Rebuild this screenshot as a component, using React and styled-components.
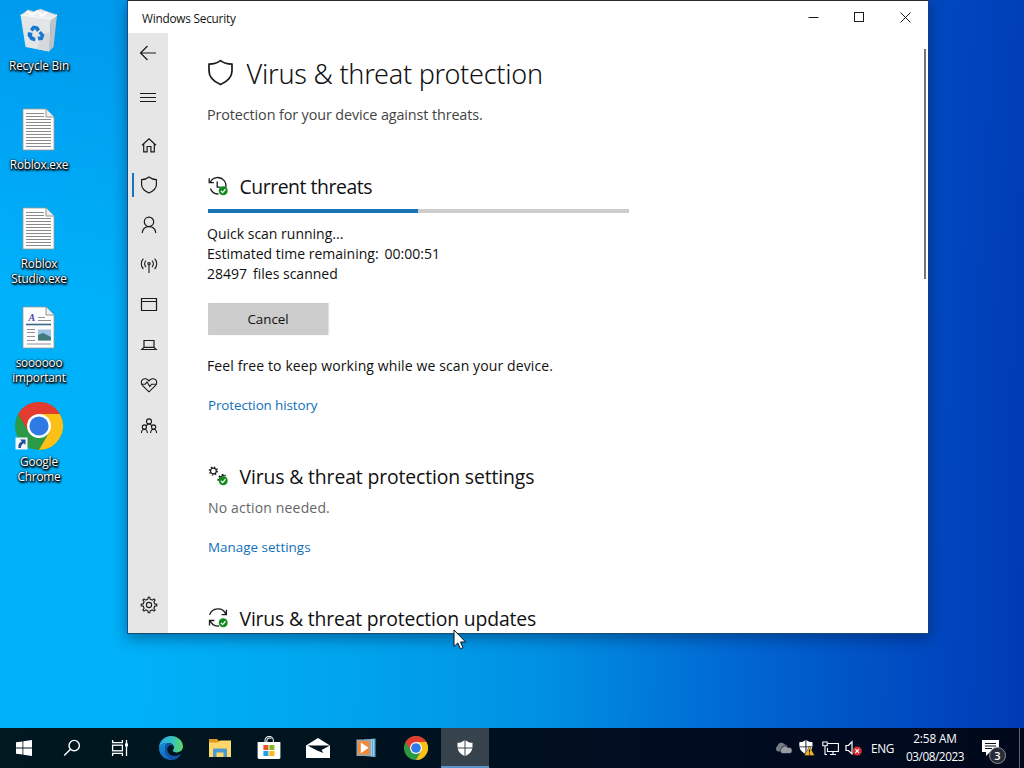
import React from "react";
import styled, { createGlobalStyle } from "styled-components";

const GlobalStyle = createGlobalStyle`
  * {
    box-sizing: border-box;
  }
  body {
    margin: 0;
    overflow: hidden;
    font-family: "Open Sans", "Noto Sans", sans-serif;
  }
`;

const Desktop = styled.div`
  position: relative;
  display: flex;
  flex-direction: column;
  width: 1024px;
  height: 768px;
  overflow: hidden;
  background:
    linear-gradient(180deg, rgba(0, 70, 190, 0.22) 0, rgba(0, 70, 190, 0) 300px),
    linear-gradient(
      91deg,
      #00b2fb 0%,
      #00b0f8 15%,
      #00a6ee 32%,
      #009ae8 45%,
      #008fe2 54%,
      #007bda 63%,
      #0066d2 73%,
      #0054c6 83%,
      #0046be 92%,
      #003ab4 100%
    );
`;

const Icons = styled.div`
  flex: 1;
  display: flex;
  flex-direction: column;
  width: 78px;
  padding-top: 6px;
`;
const DesktopIcon = styled.div`
  display: flex;
  flex-direction: column;
  align-items: center;
  height: 99px;
  svg {
    flex: none;
    overflow: visible;
  }
`;
const IconLabel = styled.div`
  margin-top: 4px;
  font-size: 11.8px;
  line-height: 15px;
  letter-spacing: ${(props) => props.$ls || -0.18}px;
  text-align: center;
  white-space: nowrap;
  color: white;
  text-shadow: 0 0 2px #000, 1px 1px 2px #000, 0 1px 2px #000, 1px 2px 2px rgba(0, 0, 0, 0.7);
`;

const Window = styled.div`
  position: absolute;
  left: 127px;
  top: 0;
  width: 802px;
  height: 634px;
  display: flex;
  flex-direction: column;
  border: 1px solid #14498c;
  border-top-color: #2b2b33;
  border-right-color: #1a3a8c;
  border-bottom-color: #14506e;
  background: white;
  box-shadow: 0 4px 14px rgba(0, 20, 60, 0.45);
`;
const TitleBar = styled.div`
  display: flex;
  align-items: center;
  height: 32px;
  padding-left: 14px;
`;
const TitleText = styled.div`
  flex: 1;
  padding-top: 1px;
  font-size: 11.8px;
  letter-spacing: -0.22px;
  color: #111;
`;
const TitleButton = styled.div`
  display: flex;
  justify-content: center;
  align-items: center;
  width: 46px;
  height: 32px;
  svg {
    display: block;
  }
`;
const Body = styled.div`
  flex: 1;
  display: flex;
  min-height: 0;
`;

const Nav = styled.div`
  display: flex;
  flex-direction: column;
  width: 40px;
  padding-bottom: 8px;
  background: #e6e6e6;
`;
const NavItem = styled.div`
  display: flex;
  justify-content: center;
  align-items: center;
  height: 40px;
  margin-top: ${(props) => props.$gap || 0}px;
  padding-left: 1px;
  svg {
    display: block;
  }
`;
const TopNavItem = styled(NavItem)`
  padding-left: 0;
`;
const ActiveNavItem = styled(NavItem)`
  justify-content: flex-start;
  gap: 4.5px;
  padding-left: 4px;
  &:before {
    content: "";
    width: 2px;
    height: 24px;
    background: #1a73bd;
  }
`;
const Spacer = styled.div`
  flex: 1;
`;

const Content = styled.div`
  flex: 1;
  padding-left: 39px;
  overflow: hidden;
  color: #111;
`;
const PageHead = styled.div`
  display: flex;
  align-items: center;
  height: 40px;
  margin-top: 20px;
  svg {
    margin-top: -2px;
  }
`;
const PageTitle = styled.div`
  margin: 2px 0 0 12.5px;
  font-family: "Noto Sans", sans-serif;
  font-weight: 300;
  font-size: 27px;
  line-height: 40px;
  letter-spacing: -0.24px;
  white-space: nowrap;
`;
const SubTitle = styled.div`
  margin-top: 12px;
  font-size: 14.4px;
  line-height: 20px;
  letter-spacing: -0.12px;
  color: #444;
`;
const SectionHead = styled.div`
  display: flex;
  align-items: center;
  height: 28px;
  margin-top: ${(props) => props.$top}px;
  svg {
    flex: none;
    margin: 1px 0 0 0.5px;
  }
`;
const SectionTitle = styled.div`
  margin-top: 2px;
  margin-left: 11px;
  font-size: 19.4px;
  line-height: 28px;
  letter-spacing: ${(props) => props.$ls || 0}px;
  white-space: nowrap;
`;
const Track = styled.div`
  width: 421px;
  height: 4px;
  margin: 9px 0 11px 1px;
  background: #ccc;
`;
const Bar = styled.div`
  width: 210px;
  height: 100%;
  background: #1a73b5;
`;
const Line = styled.div`
  display: flex;
  gap: 6px;
  font-size: 14px;
  line-height: 20px;
  white-space: nowrap;
`;
const Note = styled.div`
  margin-top: 21px;
  font-size: 14px;
  line-height: 20px;
  letter-spacing: 0.11px;
`;
const Status = styled.div`
  margin: 8px 0 0 1px;
  font-size: 14px;
  line-height: 20px;
  letter-spacing: 0.16px;
  color: #666;
`;
const CancelButton = styled.div`
  width: 120px;
  height: 32px;
  margin: 19px 0 0 1px;
  font-size: 13.4px;
  line-height: 32px;
  letter-spacing: -0.06px;
  text-align: center;
  background: #ccc;
  box-shadow: 1px 0 1px #e2e2e2;
`;
const Link = styled.div`
  margin: 19px 0 0 1px;
  font-size: 13.4px;
  line-height: 20px;
  letter-spacing: ${(props) => props.$ls}px;
  color: #0f70ba;
`;
const Scroll = styled.div`
  width: 2px;
  height: 230px;
  margin: 16px 2px 0 0;
  background: #767676;
`;

const Taskbar = styled.div`
  display: flex;
  width: 1024px;
  height: 40px;
  background: linear-gradient(90deg, #011820 0%, #00141f 30%, #010c20 65%, #01081c 100%);
  color: white;
`;
const TaskGroup = styled.div`
  display: flex;
  gap: ${(props) => props.$gap || 0}px;
  margin-right: 3px;
`;
const TaskButton = styled.div`
  display: flex;
  justify-content: center;
  align-items: center;
  width: 48px;
  height: 40px;
  svg {
    display: block;
  }
`;
const ActiveTaskButton = styled(TaskButton)`
  padding-top: 2px;
  background: #36434d;
  border-bottom: 2px solid #5b93c9;
`;
const Tray = styled.div`
  display: flex;
  align-items: center;
  gap: 6px;
  margin-left: auto;
  margin-right: 4px;
  padding-right: 19px;
  border-right: 1px solid #5a6470;
  svg {
    display: block;
    overflow: visible;
  }
`;
const Lang = styled.div`
  margin-left: 2px;
  font-size: 11.8px;
  letter-spacing: -0.3px;
`;
const Clock = styled.div`
  width: 60px;
  margin: -1px 11px 1px 5px;
  font-size: 11.8px;
  line-height: 18px;
  letter-spacing: -0.14px;
  text-align: center;
  white-space: nowrap;
`;
const ClockDate = styled.div`
  letter-spacing: -0.46px;
`;
const Notifications = styled.div`
  position: relative;
  width: 18px;
  height: 16px;
`;
const Count = styled.div`
  position: absolute;
  left: 7px;
  top: 7px;
  width: 17px;
  height: 17px;
  border: 1px solid #8b9097;
  border-radius: 50%;
  background: #272c36;
  font-size: 11px;
  font-weight: 600;
  line-height: 15px;
  text-align: center;
`;
const Pointer = styled.svg`
  position: absolute;
  left: 452.5px;
  top: 629px;
`;

const Outline = ({ size = 20, stroke = 1.2, children }) => (
  <svg
    width={size}
    height={size}
    viewBox={`0 0 ${size} ${size}`}
    fill="none"
    stroke="#1a1a1a"
    strokeWidth={stroke}
  >
    {children}
  </svg>
);

const ShieldIcon = () => (
  <Outline>
    <path d="M10 2C7.9 3.7 5.4 4.6 2.6 4.7V9.4C2.6 13.2 5.8 16 10 18C14.2 16 17.4 13.2 17.4 9.4V4.7C14.6 4.6 12.1 3.7 10 2Z" />
  </Outline>
);

const BigShieldIcon = () => (
  <Outline size={27} stroke={1.7}>
    <path d="M13.5 1.6C10.2 4 6.3 5 2 5.2V12C2 18.6 7.4 22.8 13.5 25.6C19.6 22.8 25 18.6 25 12V5.2C20.7 5 16.8 4 13.5 1.6Z" />
  </Outline>
);

const GearIcon = () => (
  <Outline stroke={1.1}>
    <circle cx="10" cy="10" r="2.6" />
    <path d="M8.9 4.2L9.2 2.2H10.8L11.1 4.2L13.3 5.1L15 3.9L16.1 5L14.9 6.7L15.8 8.9L17.8 9.2V10.8L15.8 11.1L14.9 13.3L16.1 15L15 16.1L13.3 14.9L11.1 15.8L10.8 17.8H9.2L8.9 15.8L6.7 14.9L5 16.1L3.9 15L5.1 13.3L4.2 11.1L2.2 10.8V9.2L4.2 8.9L5.1 6.7L3.9 5L5 3.9L6.7 5.1Z" />
  </Outline>
);

const Check = () => (
  <g>
    <circle cx="15.2" cy="14.8" r="4.5" fill="#128a1c" stroke="none" />
    <path d="M12.9 14.9L14.6 16.6L17.5 13.3" fill="none" stroke="#fff" strokeWidth="1.3" />
  </g>
);

const HistoryIcon = () => (
  <Outline size={21} stroke={1.3}>
    <path d="M2.3 6.2A8.2 8.2 0 1 1 12 17.6M10.5 18A8.3 8.3 0 0 1 2.4 12.5" />
    <path d="M1.2 2.2V6.6H5.8M9.2 5.6V11.2H12.6" />
    <Check />
  </Outline>
);

const GearsIcon = () => (
  <Outline size={21} stroke={1.2}>
    <circle cx="5.4" cy="5" r="2.9" />
    <circle cx="5.4" cy="5" r="3.9" strokeDasharray="1.4 1.66" strokeWidth="1.5" />
    <path d="M11.4 14.6A4.3 4.3 0 0 1 17.4 10" />
    <path d="M10.2 14.6A5.4 5.4 0 0 1 18 9.2" strokeDasharray="1.6 2" strokeWidth="1.5" />
    <Check />
  </Outline>
);

const UpdateIcon = () => (
  <Outline size={21} stroke={1.3}>
    <path d="M1.6 6.9A8.7 8.7 0 0 1 18 6.4M18.4 1.8V6.7H13.6" />
    <path d="M11 18A8.7 8.7 0 0 1 2 12.6M1.5 17.6V12.5H6.4" />
    <Check />
  </Outline>
);

const RecycleBin = () => (
  <svg width="48" height="48" viewBox="0 0 48 48">
    <path d="M6 9L13 4L20 6L25 3L33 6L42 9L36 13L11 12Z" fill="#e9edf0" stroke="#b9c4cc" strokeWidth="0.8" />
    <path d="M5.5 9L36 13L34 45.5L10.5 41Z" fill="#e3e6e8" />
    <path d="M36 13L42 9L38.5 41L34 45.5Z" fill="#bdc3c8" />
    <path d="M26 29L35 26L34 45.5L22 43Z" fill="#d6d9db" />
    <path d="M5.5 9L36 13L42 9" fill="none" stroke="#fafafa" strokeWidth="1.2" />
    <path d="M12 5L17 9L22 5L27 10L32 6" fill="none" stroke="#fff" strokeWidth="2" />
    <g fill="#1878cf">
      <path d="M15 23L18 19.5L23 20.5L25 23.5L22 26L20 23L17.5 25.5Z" />
      <path d="M26 25L29.5 29L27.5 34L23.5 34.5L22.5 30.5L26 30.5L23.5 27Z" />
      <path d="M13 26L17.5 27L17 30L20.5 32L20 35.5L15.5 34L12.5 29.5Z" />
    </g>
  </svg>
);

const Page = ({ children }) => (
  <svg width="48" height="48" viewBox="0 0 48 48">
    <path d="M8 4H31L39 12V45H8Z" fill="#fdfdfd" stroke="#9a9a92" strokeWidth="0.8" />
    <path d="M31 4V12H39" fill="#eee" stroke="#888" strokeWidth="0.9" />
    {children}
  </svg>
);

const TextFile = () => (
  <Page>
    <path
      d="M11 8.5H29M11 11.5H29M11 14.5H36M11 17.5H36M11 20.5H36M11 23.5H36M11 26.5H36M11 29.5H36M11 32.5H36M11 35.5H36M11 38.5H36M11 41.5H36"
      stroke="#8a8a8a"
      strokeWidth="1"
    />
  </Page>
);

const Letter = styled.text`
  font: italic bold 10px "Liberation Serif", serif;
`;
const WriterFile = () => (
  <Page>
    <Letter x="13.5" y="18" fill="#4a3fb0">
      A
    </Letter>
    <path d="M23 14.5H30M23 17.5H36M12 26.5H20M12 29.5H20M12 33.5H20M12 37.5H20M12 41H36" stroke="#8c9097" />
    <path d="M11 21.5H36" stroke="#386a8c" strokeWidth="1.6" />
    <rect x="23" y="26.5" width="13" height="11" fill="#9cc4e4" />
    <path d="M23 32L28 30L36 34V37.5H23Z" fill="#437a7c" />
  </Page>
);

const Chrome = ({ size, arrow }) => (
  <svg width={size} height={size} viewBox="0 0 48 48">
    <circle cx="24" cy="24" r="24" fill="#2b9a46" />
    <path d="M24 48L34.4 30L24 12H44.8A24 24 0 0 1 24 48Z" fill="#fbc117" />
    <path d="M3.2 12A24 24 0 0 1 44.8 12H24L13.6 30Z" fill="#e33b2e" />
    <circle cx="24" cy="24" r="12" fill="#fff" />
    <circle cx="24" cy="24" r="9.6" fill="#2f7ae5" />
    {arrow && (
      <g>
        <rect x="0.5" y="35.5" width="12" height="12" fill="#f4f6f8" />
        <path d="M5 37.5H10.5V43L8.8 41.3C7 42 6 43.5 5.8 46H3.4C3 42.5 4.5 40.3 7 39.5Z" fill="#1f4f9c" />
      </g>
    )}
  </svg>
);

const Quad = () => (
  <g>
    <path d="M8.5 1.2C6.4 2.9 4.2 3.7 1.5 3.8V8.5H8.5Z" />
    <path d="M9.5 1.2C11.6 2.9 13.8 3.7 16.5 3.8V8.5H9.5Z" />
    <path d="M1.7 9.5H8.5V17C4.7 15.2 2.2 12.8 1.7 9.5Z" />
    <path d="M9.5 9.5H16.3C15.8 12.8 13.3 15.2 9.5 17Z" />
  </g>
);

const App = () => {
  return (
    <>
      <GlobalStyle />
      <Desktop>
        <Icons>
          <DesktopIcon>
            <RecycleBin />
            <IconLabel $ls={-0.15}>Recycle Bin</IconLabel>
          </DesktopIcon>
          <DesktopIcon>
            <TextFile />
            <IconLabel $ls={-0.2}>Roblox.exe</IconLabel>
          </DesktopIcon>
          <DesktopIcon>
            <TextFile />
            <IconLabel $ls={-0.24}>
              Roblox
              <br />
              Studio.exe
            </IconLabel>
          </DesktopIcon>
          <DesktopIcon>
            <WriterFile />
            <IconLabel $ls={-0.22}>
              soooooo
              <br />
              important
            </IconLabel>
          </DesktopIcon>
          <DesktopIcon>
            <Chrome size={48} arrow />
            <IconLabel $ls={-0.16}>
              Google
              <br />
              Chrome
            </IconLabel>
          </DesktopIcon>
        </Icons>

        <Taskbar>
          <TaskGroup>
            <TaskButton>
              <svg width="16" height="16" viewBox="0 0 16 16" fill="#fff">
                <path d="M0 2.3L6.5 1.4V7.6H0ZM7.3 1.3L16 0V7.6H7.3ZM0 8.4H6.5V14.6L0 13.7ZM7.3 8.4H16V16L7.3 14.7Z" />
              </svg>
            </TaskButton>
            <TaskButton>
              <Outline size={18} stroke={1.4}>
                <g stroke="#fff">
                  <circle cx="11.2" cy="6.6" r="5.2" />
                  <path d="M7.5 10.3L1.2 16.6" />
                </g>
              </Outline>
            </TaskButton>
            <TaskButton>
              <Outline size={18} stroke={1.3}>
                <g stroke="#fff">
                  <path d="M1.6 1V3.6H11.4V1M1.6 17V14.4H11.4V17" />
                  <rect x="1.6" y="6.2" width="9.8" height="5.6" />
                  <path d="M15.5 1V17" />
                  <path d="M14 5.9H17" strokeWidth="3" />
                </g>
              </Outline>
            </TaskButton>
          </TaskGroup>
          <TaskGroup $gap={1}>
            <TaskButton>
              <svg width="24" height="24" viewBox="0 0 24 24">
                <defs>
                  <linearGradient id="edgeTop" x1="0" x2="1">
                    <stop offset="0" stopColor="#22a5e8" />
                    <stop offset="0.55" stopColor="#35c3c6" />
                    <stop offset="1" stopColor="#5fd858" />
                  </linearGradient>
                  <linearGradient id="edgeLow" x1="0" y1="0" x2="0.6" y2="1">
                    <stop offset="0" stopColor="#1b8fe0" />
                    <stop offset="1" stopColor="#1063b8" />
                  </linearGradient>
                </defs>
                <path d="M0 12C0 5 5.3 0 12 0C19 0 24 5 24 10.6C24 14 21.4 16.4 18 16.4C15.4 16.4 13.8 15.6 13.8 14.6C13.8 13.8 15 13.4 15 11.6C15 9 12.6 7 9 7C4.5 7 1 9 0 12Z" fill="url(#edgeTop)" />
                <path d="M0 12C1 8.6 4.8 6.6 9 7C7 8.4 6 10.6 6 13C6 18.4 10 22.6 15 23.6C7 25.4 0 20 0 12Z" fill="url(#edgeLow)" />
                <path d="M9.2 10.5C8 12 7.8 14.6 9.4 17C11.8 20.4 17.4 20.8 22 18C20.4 21.4 17.6 23.4 14.6 23.7C9.4 22.6 6 18.4 6 13C6 10.6 7.2 8.4 9 7C12 7.2 13.6 8.4 14.4 9.6C12.4 8.8 10.4 9 9.2 10.5Z" fill="#1257a6" />
              </svg>
            </TaskButton>
            <TaskButton>
              <svg width="22" height="20" viewBox="0 0 22 20">
                <path d="M0 1H8L10 3H22V19H0Z" fill="#dd9a1e" />
                <path d="M0 4.5H9L11 2.5H22V19H0Z" fill="#ffd869" />
                <path d="M4 19V11.5Q4 10.5 5 10.5H17Q18 10.5 18 11.5V19H14.5V14.5H7.5V19Z" fill="#4a98d4" />
              </svg>
            </TaskButton>
            <TaskButton>
              <svg width="24" height="24" viewBox="0 0 24 24">
                <path d="M8 7V4.6A4.2 4.2 0 0 1 16.4 4.6V7M9.8 7V4.6A3.2 3.2 0 0 1 14.4 2.4" fill="none" stroke="#e8eef2" strokeWidth="1.1" />
                <path d="M0.6 6H23.4V21.6Q23.4 23 22 23H2Q0.6 23 0.6 21.6Z" fill="#fff" />
                <rect x="6.4" y="9" width="5" height="5" fill="#e8532a" />
                <rect x="12.4" y="9" width="5" height="5" fill="#84b91f" />
                <rect x="6.4" y="15" width="5" height="5" fill="#24a0e2" />
                <rect x="12.4" y="15" width="5" height="5" fill="#f9b71a" />
              </svg>
            </TaskButton>
            <TaskButton>
              <svg width="24" height="20" viewBox="0 0 24 20">
                <path d="M0 7.5L12 0L24 7.5V20H0Z" fill="#fff" />
                <path d="M1.5 7.5H24L15.5 12L17.5 15L11 12.4Z" fill="#03121f" />
              </svg>
            </TaskButton>
            <TaskButton>
              <svg width="22" height="20" viewBox="0 0 22 20">
                <path d="M8 1.5L19.5 0.5V19L8 18Z" fill="#5aa7cf" />
                <path d="M15.6 1V18.6M17.6 1V18.8" stroke="#b8dcec" strokeWidth="0.8" />
                <rect x="0.5" y="1.5" width="14.5" height="16.5" fill="#8fa9ba" />
                <rect x="2" y="3" width="11.5" height="13.5" fill="#ee8a3a" />
                <path d="M4.8 4.4L12.6 9.8L4.8 15.2Z" fill="#fff" />
              </svg>
            </TaskButton>
            <TaskButton>
              <Chrome size={24} />
            </TaskButton>
            <ActiveTaskButton>
              <svg width="18" height="18" viewBox="0 0 18 18" fill="#fff">
                <Quad />
              </svg>
            </ActiveTaskButton>
          </TaskGroup>
          <Tray>
            <svg width="17" height="12" viewBox="0 0 17 12">
              <path d="M3 9.5A3 3 0 0 1 2.5 4A4 4 0 0 1 9.8 2.5A3 3 0 0 1 12.5 4L7 9.5Z" fill="#777d85" />
              <path d="M7 11.5A2.8 2.8 0 0 1 6.6 6.4A3.6 3.6 0 0 1 13 5.5A2.8 2.8 0 0 1 15 11.5Z" fill="#989da4" stroke="#01081c" strokeWidth="0.6" />
            </svg>
            <svg width="18" height="18" viewBox="0 0 18 18">
              <g transform="scale(0.88)" fill="#fff">
                <Quad />
              </g>
              <path d="M11.5 7L16.6 16.6H6.4Z" fill="#f5b52a" stroke="#01081c" strokeWidth="0.4" />
              <path d="M11.5 10.5V13.4M11.5 14.3V15.6" stroke="#222" strokeWidth="1.2" />
            </svg>
            <svg width="17" height="16" viewBox="0 0 17 16" fill="none" stroke="#fff" strokeWidth="1.1">
              <path d="M6 3.5H16.4V11.5H5.5V8M8 14.5H14M11 11.5V14.5" />
              <path d="M0.8 2H5.2V5.8H0.8ZM3 6V14.5H5" />
            </svg>
            <svg width="18" height="16" viewBox="0 0 18 16">
              <path d="M1 5.5H3.4L7 1.8V13.8L3.4 10.5H1Z" fill="none" stroke="#fff" strokeWidth="1.2" />
              <circle cx="12.2" cy="11" r="4.6" fill="#d22f34" />
              <path d="M10.4 9.2L14 12.8M14 9.2L10.4 12.8" stroke="#fff" strokeWidth="1.2" />
            </svg>
            <Lang>ENG</Lang>
            <Clock>
              2:58 AM
              <ClockDate>03/08/2023</ClockDate>
            </Clock>
            <Notifications>
              <svg width="17" height="16" viewBox="0 0 17 16">
                <path d="M0 0H17V12H8L4 16V12H0Z" fill="#fff" />
                <path d="M3 3.5H14M3 6H14M3 8.5H10" stroke="#0a1022" strokeWidth="1" />
              </svg>
              <Count>3</Count>
            </Notifications>
          </Tray>
        </Taskbar>

        <Window>
          <TitleBar>
            <TitleText>Windows Security</TitleText>
            <TitleButton>
              <Outline size={11} stroke={1}>
                <path d="M0.5 5.5H10.5" />
              </Outline>
            </TitleButton>
            <TitleButton>
              <Outline size={11} stroke={1}>
                <rect x="0.5" y="0.5" width="9" height="9" />
              </Outline>
            </TitleButton>
            <TitleButton>
              <Outline size={11} stroke={1}>
                <path d="M0.5 0.5L10.5 10.5M10.5 0.5L0.5 10.5" />
              </Outline>
            </TitleButton>
          </TitleBar>
          <Body>
            <Nav>
              <TopNavItem>
                <Outline>
                  <path d="M18 10H2.5M9.5 3L2.5 10L9.5 17" />
                </Outline>
              </TopNavItem>
              <TopNavItem $gap={4}>
                <Outline stroke={1}>
                  <path d="M2 6.5H18M2 10.5H18M2 14.5H18" />
                </Outline>
              </TopNavItem>
              <NavItem $gap={8}>
                <Outline>
                  <path d="M3 10.3L10 3.9L17 10.3M4.7 9V16.9H8.1V11.5H11.9V16.9H15.3V9" />
                </Outline>
              </NavItem>
              <ActiveNavItem>
                <ShieldIcon />
              </ActiveNavItem>
              <NavItem>
                <Outline>
                  <circle cx="10" cy="6.8" r="4.7" />
                  <path d="M3.2 18C3.6 14.2 6.3 11.6 10 11.6C13.7 11.6 16.4 14.2 16.8 18" />
                </Outline>
              </NavItem>
              <NavItem>
                <Outline stroke={1.1}>
                  <circle cx="10" cy="8.8" r="1.2" />
                  <path d="M10 10V18M7 5.6A4.4 4.4 0 0 0 7 12M13 5.6A4.4 4.4 0 0 1 13 12M4.4 3.6A7.4 7.4 0 0 0 4.4 14M15.6 3.6A7.4 7.4 0 0 1 15.6 14" />
                </Outline>
              </NavItem>
              <NavItem>
                <Outline>
                  <path d="M2.5 3.5H17.5V15.5H2.5ZM2.5 6.5H17.5" />
                </Outline>
              </NavItem>
              <NavItem>
                <Outline>
                  <path d="M5 5.5H15V12.3H5ZM5 12.3L2.8 14.5H17.2L15 12.3" />
                </Outline>
              </NavItem>
              <NavItem>
                <Outline stroke={1.1}>
                  <path d="M10 16.8L3.4 10.3C1.8 8.6 2 6 3.5 4.7C5.4 3 8.2 3.5 10 5.9C11.8 3.5 14.6 3 16.5 4.7C18 6 18.2 8.6 16.6 10.3Z" />
                  <path d="M2.6 9.2H6.2L8 7L10.8 11.6L12.6 9.2H17.4" />
                </Outline>
              </NavItem>
              <NavItem $gap={1}>
                <Outline stroke={1.1}>
                  <circle cx="10" cy="5.4" r="2.5" />
                  <circle cx="5.4" cy="11" r="2.1" />
                  <circle cx="14.6" cy="11" r="2.1" />
                  <path d="M2.4 17C2.6 14.6 3.7 13.2 5.4 13.2C7.1 13.2 8.2 14.6 8.4 17M11.6 17C11.8 14.6 12.9 13.2 14.6 13.2C16.3 13.2 17.4 14.6 17.6 17M7.3 10.4C7.6 8.8 8.6 8 10 8C11.4 8 12.4 8.8 12.7 10.4" />
                </Outline>
              </NavItem>
              <Spacer />
              <NavItem>
                <GearIcon />
              </NavItem>
            </Nav>
            <Content>
              <PageHead>
                <BigShieldIcon />
                <PageTitle>Virus & threat protection</PageTitle>
              </PageHead>
              <SubTitle>Protection for your device against threats.</SubTitle>

              <SectionHead $top={47}>
                <HistoryIcon />
                <SectionTitle $ls={-0.45}>Current threats</SectionTitle>
              </SectionHead>
              <Track>
                <Bar />
              </Track>
              <Line>Quick scan running...</Line>
              <Line>
                <span>Estimated time remaining:</span>
                <span>00:00:51</span>
              </Line>
              <Line>
                <span>28497</span>
                <span>files scanned</span>
              </Line>
              <CancelButton>Cancel</CancelButton>
              <Note>Feel free to keep working while we scan your device.</Note>
              <Link $ls={-0.1}>Protection history</Link>

              <SectionHead $top={47}>
                <GearsIcon />
                <SectionTitle $ls={-0.14}>Virus & threat protection settings</SectionTitle>
              </SectionHead>
              <Status>No action needed.</Status>
              <Link $ls={0.03}>Manage settings</Link>

              <SectionHead $top={47}>
                <UpdateIcon />
                <SectionTitle $ls={-0.18}>Virus & threat protection updates</SectionTitle>
              </SectionHead>
            </Content>
            <Scroll />
          </Body>
        </Window>

        <Pointer width="14" height="21" viewBox="0 0 14 21">
          <path d="M1 1V17.5L4.8 14L7.4 19.8L10 18.7L7.5 13H12.6Z" fill="#fff" stroke="#111" strokeWidth="1" />
        </Pointer>
      </Desktop>
    </>
  );
};

export default App;
